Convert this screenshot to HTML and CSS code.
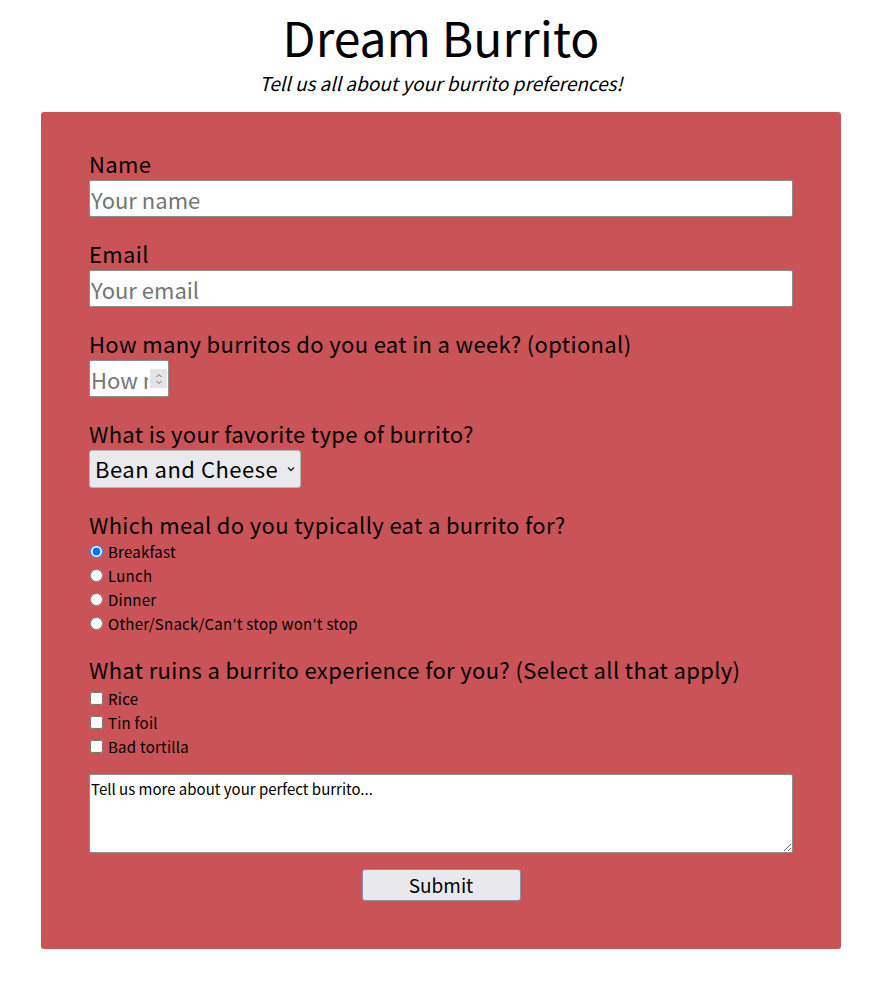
FILE: index.html
```html
<!DOCTYPE html>
<html lang="en">
<head>
<meta charset="utf-8">
<title>Dream Burrito</title>
<link rel="stylesheet" href="styles.css">
</head>
<body>
<header class="header">
  <h1 class="title">Dream Burrito</h1>
  <p class="subtitle">Tell us all about your burrito preferences!</p>
</header>
<form class="survey">
  <div class="group">
    <label class="label" for="name">Name</label>
    <input class="field" id="name" type="text" placeholder="Your name">
  </div>
  <div class="group">
    <label class="label" for="email">Email</label>
    <input class="field" id="email" type="email" placeholder="Your email">
  </div>
  <div class="group">
    <label class="label" for="count">How many burritos do you eat in a week? (optional)</label>
    <div class="number-wrap">
      <input class="field number" id="count" type="number" placeholder="How many?">
      <span class="spinner"><svg width="10" height="14" viewBox="0 0 10 14"><path d="M2.5 5 L5 2.5 L7.5 5 M2.5 9 L5 11.5 L7.5 9" fill="none" stroke="#6d6d75" stroke-width="1"/></svg></span>
    </div>
  </div>
  <div class="group">
    <label class="label" for="type">What is your favorite type of burrito?</label>
    <div class="select-wrap">
      <select class="select" id="type">
        <option>Bean and Cheese</option>
        <option>Carne Asada</option>
        <option>Chicken</option>
      </select>
      <svg class="chev" width="10" height="8" viewBox="0 0 10 8"><path d="M2 2.5 L5 5.5 L8 2.5" fill="none" stroke="#222" stroke-width="1.4"/></svg>
    </div>
  </div>
  <div class="group group-radio">
    <p class="label">Which meal do you typically eat a burrito for?</p>
    <label class="option"><input type="radio" name="meal" checked> Breakfast</label>
    <label class="option"><input type="radio" name="meal"> Lunch</label>
    <label class="option"><input type="radio" name="meal"> Dinner</label>
    <label class="option"><input type="radio" name="meal"> Other/Snack/Can't stop won't stop</label>
  </div>
  <div class="group group-check">
    <p class="label">What ruins a burrito experience for you? (Select all that apply)</p>
    <label class="option"><input type="checkbox"> Rice</label>
    <label class="option"><input type="checkbox"> Tin foil</label>
    <label class="option"><input type="checkbox"> Bad tortilla</label>
  </div>
  <textarea class="comments">Tell us more about your perfect burrito...</textarea>
  <div class="actions">
    <button class="submit" type="button">Submit</button>
  </div>
</form>
</body>
</html>
```
FILE: styles.css
```css
* { box-sizing: border-box; }
body {
  margin: 0;
  padding: 0 43px 0 41px;
  font-family: "Noto Sans CJK JP", "Noto Sans", sans-serif;
  color: #000;
  background: #fff;
}
.header {
  text-align: center;
  padding-top: 8px;
}
.title {
  margin: 0;
  font-size: 48px;
  font-weight: 400;
  line-height: 56px;
}
.subtitle {
  margin: 5px 0 0;
  font-size: 19px;
  line-height: 28px;
  font-style: italic;
}
.survey {
  width: 800px;
  margin: 15px 0 0;
  background: #c95356;
  border-radius: 3px;
  padding: 37px 48px 48px;
}
.group { margin-bottom: 22px; }
.group-radio { margin-bottom: 19px; }
.group-check { margin-bottom: 15px; }
.label {
  display: block;
  margin: 0;
  font-size: 22px;
  line-height: 29px;
  padding-bottom: 2px;
  letter-spacing: 0.35px;
}
.field {
  display: block;
  width: 100%;
  height: 37px;
  border: 1px solid #8f8f8f;
  border-radius: 2px;
  padding: 0 1px;
  font-family: inherit;
  font-size: 22px;
  background: #fff;
}
.field::placeholder { color: #757575; }
.number-wrap {
  position: relative;
  width: 80px;
}
.number { width: 80px; padding-right: 20px; }
.number::-webkit-inner-spin-button,
.number::-webkit-outer-spin-button { -webkit-appearance: none; margin: 0; }
.spinner {
  position: absolute;
  top: 9px;
  right: 2px;
  width: 17px;
  height: 19px;
  background: #e3e3e8;
  display: flex;
  align-items: center;
  justify-content: center;
}
.select-wrap {
  position: relative;
  width: 212px;
}
.select {
  appearance: none;
  -webkit-appearance: none;
  display: block;
  width: 212px;
  height: 38px;
  border: 1px solid #b4b4ba;
  border-radius: 3px;
  background: #e9e9ee;
  font-family: inherit;
  font-size: 22px;
  letter-spacing: 0.5px;
  color: #000;
  padding: 0 20px 2px 5px;
}
.chev {
  position: absolute;
  right: 5px;
  top: 15px;
  pointer-events: none;
}
.group-radio .label { margin-bottom: -1px; }
.group-check .label { margin-bottom: 1px; }
.option {
  display: flex;
  align-items: center;
  height: 24px;
  font-size: 15px;
  letter-spacing: 0.25px;
  padding-bottom: 2px;
}
.option input {
  margin: 1px 5px 0 1px;
  width: 13px;
  height: 13px;
}
.comments {
  display: block;
  width: 100%;
  height: 79px;
  border: 1px solid #8f8f8f;
  border-radius: 2px;
  padding: 3px 1px;
  font-family: inherit;
  font-size: 15px;
  line-height: 21px;
  resize: vertical;
}
.actions {
  display: flex;
  justify-content: center;
  margin-top: 16px;
}
.submit {
  width: 159px;
  height: 32px;
  border: 1px solid #8f8f9d;
  border-radius: 3px;
  background: #e9e9ed;
  font-family: inherit;
  font-size: 19px;
  color: #000;
  padding: 0 0 1px;
}
```
